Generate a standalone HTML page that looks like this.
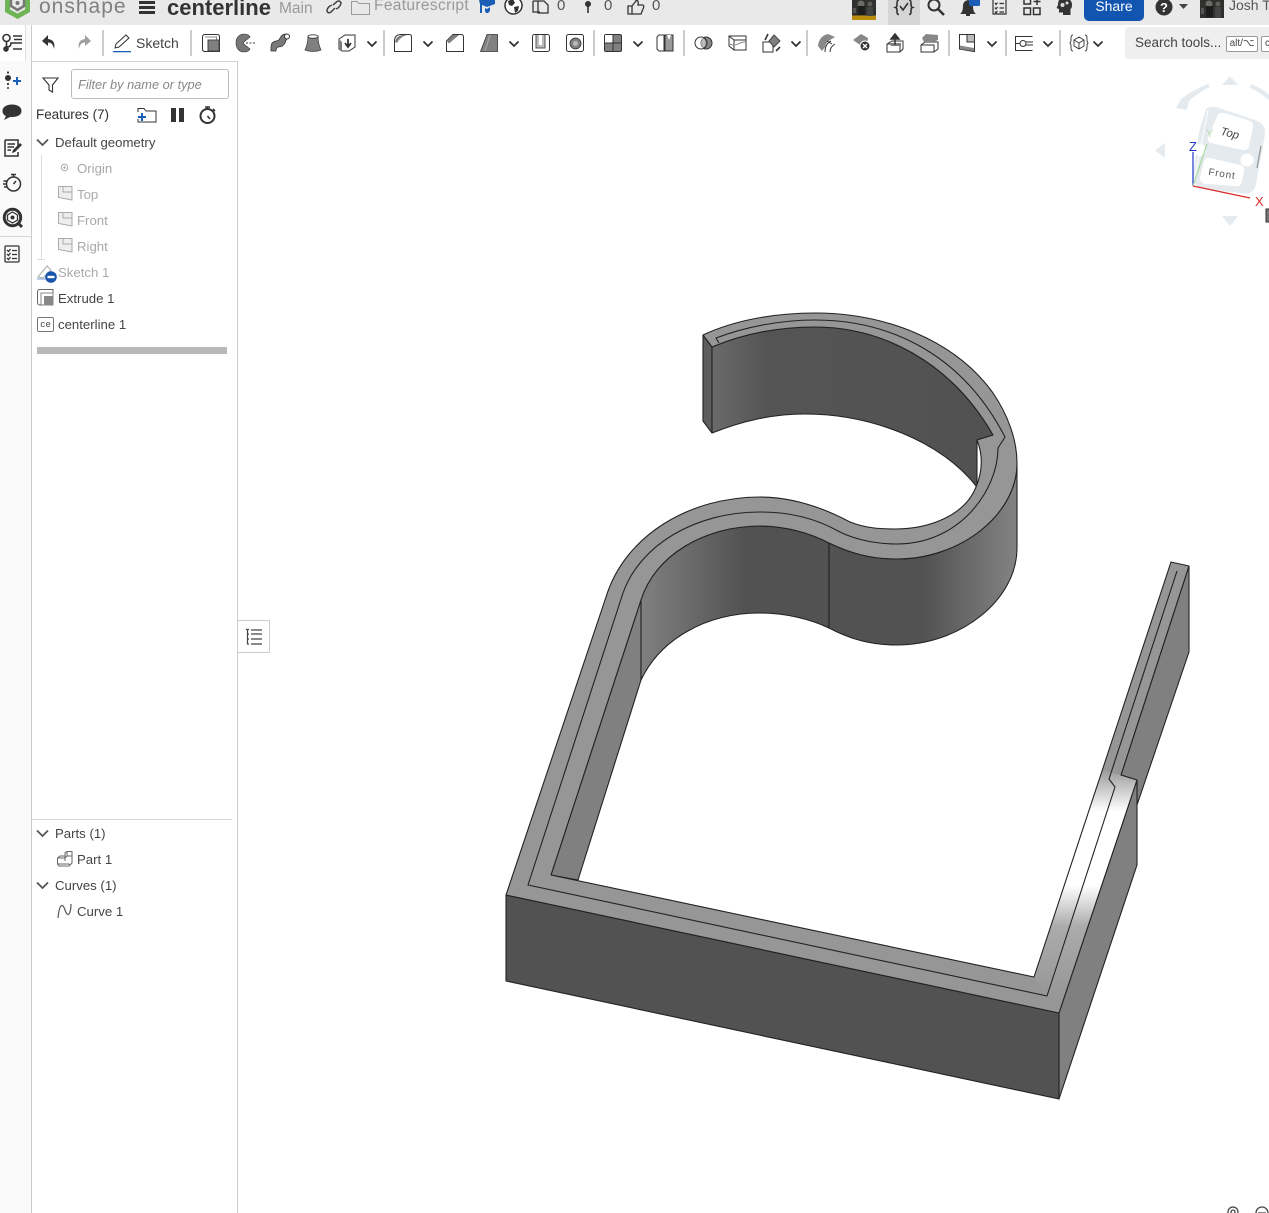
<!DOCTYPE html>
<html><head><meta charset="utf-8"><title>centerline</title>
<style>
*{box-sizing:border-box}
html,body{margin:0;padding:0;width:1269px;height:1213px;overflow:hidden;background:#fff;font-family:"Liberation Sans",sans-serif;color:#444}
.a{position:absolute}
.t{position:absolute;font-size:13.2px;line-height:16px;white-space:nowrap;color:#444}
.d{color:#a9a9a9}
.b{position:absolute;width:2px;height:26px;top:30px;background:#ccc}
svg.i{position:absolute;overflow:visible}
</style></head><body>
<div class="a" style="left:0;top:0;width:1269px;height:25px;background:#e9e9e9"></div>
<div class="a" style="left:0;top:25px;width:32px;height:1188px;background:#fafafa;border-right:1px solid #ccc"></div>
<div class="a" style="left:0;top:25px;width:26px;height:36px;background:#fff;border-right:1px solid #ddd"></div>
<div class="a" style="left:32px;top:61px;width:206px;height:1152px;background:#fff;border-top:1px solid #d4d4d4;border-right:1px solid #ccc"></div>

<!-- TOP BAR -->
<svg class="i" style="left:0;top:0" width="36" height="25" viewBox="0 0 36 25"><path d="M5-4V12L17.500 19 30 12V-4H25V9.500L17.500 13.500 10 9.500V-4Z" fill="#6fb457"/><path d="M17.500-4 24-1V6L17.500 10 11 6V-1Z" fill="none" stroke="#777" stroke-width="2.500"/><circle cx="17.500" cy="3" r="2" fill="#777"/></svg>
<div class="t" style="left:39px;top:-5px;font-size:21px;line-height:24px;color:#808080;letter-spacing:1px">onshape</div>
<div class="a" style="left:139px;top:1px;width:16px;height:3px;background:#333"></div>
<div class="a" style="left:139px;top:6px;width:16px;height:3px;background:#333"></div>
<div class="a" style="left:139px;top:11px;width:16px;height:3px;background:#333"></div>
<div class="t" style="left:167px;top:-4px;font-size:22px;line-height:24px;font-weight:bold;color:#333">centerline</div>
<div class="t" style="left:279px;top:1px;font-size:15.500px;color:#999">Main</div>
<svg class="i" style="left:326px;top:0" width="16" height="14" fill="none" stroke="#444" stroke-width="1.500"><path d="M7 5 11 1.500Q14 0 15 3 15 5 12 8L10 9M9 8 5 12Q2 14 1 11 1 8 4 6L6 5"/></svg>
<svg class="i" style="left:351px;top:0" width="19" height="15" fill="none" stroke="#999"><path d="M.5 14.500V1.500H6L8 3.500H18.500V14.500Z"/></svg>
<div class="t" style="left:374px;top:-2px;font-size:15.500px;color:#999;letter-spacing:.35px">Featurescript</div>
<svg class="i" style="left:478px;top:0" width="18" height="14" fill="#1a5eb8"><path d="M1 0H17V4L9 7 4 5V13H2V4Z"/><path d="M7 8 9 9 12 7V11L10 13H8L7 11Z"/></svg>
<svg class="i" style="left:504px;top:0" width="19" height="15"><circle cx="9.500" cy="5.500" r="8.500" fill="#fff" stroke="#333" stroke-width="1.500"/><path d="M4 1 9-1 11 3 8 6 5 5ZM10 7 15 6 14 11 11 13Z" fill="#333"/></svg>
<svg class="i" style="left:532px;top:0" width="18" height="14" fill="none" stroke="#333" stroke-width="1.300"><path d="M1 1V12H8M6 1V13H16V5L12 1H1"/></svg>
<div class="t" style="left:557px;top:-2px;font-size:15px;color:#555">0</div>
<svg class="i" style="left:584px;top:0" width="8" height="14" fill="#333"><circle cx="4" cy="4" r="3"/><rect x="3.200" y="6" width="1.600" height="7"/></svg>
<div class="t" style="left:604px;top:-2px;font-size:15px;color:#555">0</div>
<svg class="i" style="left:627px;top:0" width="18" height="15" fill="none" stroke="#333" stroke-width="1.300"><path d="M1 6H5V14H1ZM5 6 9 1V0.500Q12 0 11 5H16Q17.500 6 16 9L14 14H5"/></svg>
<div class="t" style="left:652px;top:-2px;font-size:15px;color:#555">0</div>
<svg class="i" style="left:852px;top:0" width="24" height="20"><rect width="24" height="16" fill="#2f2f2d"/><rect y="15.500" width="24" height="4.500" fill="#b98c10"/><circle cx="9" cy="4" r="3.500" fill="#6a6a66"/><circle cx="18" cy="4" r="2.500" fill="#5c5c58"/><path d="M6 6H13V15H6Z" fill="#1c1c1c"/><rect x="1" y="8" width="3" height="5" fill="#555"/><rect x="15" y="7" width="6" height="9" fill="#444"/></svg>
<div class="a" style="left:888px;top:0;width:32px;height:25px;background:#d5d5d5"></div>
<svg class="i" style="left:895px;top:0" width="18" height="16" fill="none" stroke="#333" stroke-width="1.600"><path d="M4 0Q2 0 2 3V5Q2 7 0.500 7.500 2 8 2 10V12Q2 14.500 4 14.500M14 0Q16 0 16 3V5Q16 7 17.500 7.500 16 8 16 10V12Q16 14.500 14 14.500M5 6 8 10 13 3"/></svg>
<svg class="i" style="left:926px;top:0" width="20" height="16" fill="none" stroke="#333" stroke-width="2"><circle cx="8" cy="5" r="5.500"/><path d="M12 9 18 15" stroke-width="2.500"/></svg>
<svg class="i" style="left:959px;top:0" width="22" height="16"><path d="M1 14Q4 12 4 6 4 1 9 0 14 1 14 6 14 12 17 14Z" fill="#333"/><rect x="7" y="14" width="4" height="2" fill="#333"/><rect x="10" y="-3" width="11" height="9" rx="1.500" fill="#1a5eb8"/></svg>
<svg class="i" style="left:992px;top:0" width="16" height="15" fill="none" stroke="#333" stroke-width="1.200"><path d="M1 0V14H14V0M3 3 4 4.500 5.500 2.500M3 7.500 4 9 5.500 7M3 11.500 4 13 5.500 11M7.500 3.500H12M7.500 8H12M7.500 12H12"/></svg>
<svg class="i" style="left:1023px;top:0" width="18" height="15" fill="none" stroke="#333" stroke-width="1.500"><rect x="1" y="-3" width="6.500" height="7"/><rect x="1" y="8" width="6.500" height="6.500"/><rect x="10.500" y="8" width="6.500" height="6.500"/><path d="M14 -2V5M10.500 1.500H17.500"/></svg>
<svg class="i" style="left:1055px;top:0" width="18" height="16"><path d="M8-2Q17-2 17 5 17 8 15.500 9V15H8V12.500H4V9L1.500 8 3 5Q3-2 8-2Z" fill="#333"/><circle cx="7.500" cy="5" r="2" fill="#ddd"/><circle cx="12" cy="3" r="1.500" fill="#ddd"/></svg>
<div class="a" style="left:1084px;top:-6px;width:60px;height:27px;background:#1155b0;border-radius:5px"></div>
<div class="t" style="left:1084px;top:-2px;width:60px;text-align:center;font-size:14px;color:#fff">Share</div>
<svg class="i" style="left:1155px;top:0" width="18" height="16"><circle cx="9" cy="7" r="8.500" fill="#333"/><text x="9" y="12" text-anchor="middle" font-family="Liberation Sans" font-weight="bold" font-size="13" fill="#fff">?</text></svg>
<svg class="i" style="left:1179px;top:4px" width="10" height="6"><path d="M0 0H9L4.500 5Z" fill="#444"/></svg>
<svg class="i" style="left:1200px;top:0" width="24" height="18"><rect width="24" height="18" fill="#2f2f2d"/><circle cx="9" cy="4" r="3.500" fill="#6a6a66"/><circle cx="18" cy="4" r="2.500" fill="#5c5c58"/><path d="M6 6H13V17H6Z" fill="#1c1c1c"/><rect x="1" y="8" width="3" height="6" fill="#555"/><rect x="15" y="7" width="6" height="11" fill="#444"/></svg>
<div class="t" style="left:1229px;top:-3px;font-size:14px;color:#555">Josh T</div>

<!-- LEFT RAIL -->
<svg class="i" style="left:0;top:32px" width="24" height="22" fill="none" stroke="#333" stroke-width="1.600"><circle cx="6.500" cy="6" r="3.500"/><circle cx="6" cy="17" r="2" fill="#333"/><path d="M6.500 9.500V15M7 15Q11 15 11 11H14M13 4H22M14 7.500H22M14 11H22M13 17H22"/></svg>
<svg class="i" style="left:0;top:68px" width="24" height="24"><circle cx="8" cy="4.500" r="1.100" fill="#333"/><circle cx="8" cy="10" r="3" fill="#333"/><circle cx="8" cy="16" r="1.100" fill="#333"/><circle cx="8" cy="20" r="1" fill="#333"/><path d="M13 13H21M17 9V17" stroke="#1a5eb8" stroke-width="2"/></svg>
<svg class="i" style="left:2px;top:104px" width="20" height="18"><path d="M10 0.500C15.500 .5 19.500 3 19.500 7S15.500 13 10 13L8 13 2 16 4 12C1.500 11 .5 9 .5 7 .5 3 4.500 .5 10 .5Z" fill="#333"/></svg>
<svg class="i" style="left:3px;top:138px" width="20" height="20" fill="none" stroke="#333" stroke-width="1.500"><path d="M2 2H15V10M15 14V18H2V2M4.500 6H12M4.500 9H11M4.500 12H8"/><path d="M9 15 10 12 17 5 19 7 12 14Z" fill="#333" stroke="none"/></svg>
<svg class="i" style="left:3px;top:173px" width="20" height="20" fill="none" stroke="#333" stroke-width="1.500"><circle cx="10.500" cy="11" r="7"/><path d="M8 1.500H13M10.500 2V4M10.500 11 13 8M0.500 8H4M0 11H3M1 14H4"/></svg>
<svg class="i" style="left:2px;top:207px" width="22" height="22"><circle cx="10.500" cy="10.500" r="8.200" fill="#fff" stroke="#333" stroke-width="3"/><path d="M16 16 20 20" stroke="#333" stroke-width="3"/><path d="M10.500 5 15.500 8V13L10.500 16 5.500 13V8Z" fill="none" stroke="#333" stroke-width="1.300"/><circle cx="10.500" cy="10.500" r="2" fill="#333"/></svg>
<div class="a" style="left:0;top:236px;width:32px;height:1px;background:#d4d4d4"></div>
<svg class="i" style="left:4px;top:245px" width="16" height="18" fill="none" stroke="#333" stroke-width="1.300"><rect x="1" y="1" width="14" height="16" rx="1"/><path d="M3 5 4.500 6.500 6.500 4M3 9 4.500 10.500 6.500 8M3 13 4.500 14.500 6.500 12M8 5.500H13M8 9.500H13M8 13.500H13"/></svg>

<!-- TOOLBAR -->
<svg class="i" style="left:41px;top:34px" width="16" height="16"><path d="M7 1 1 7 7 12V8.500Q12 8.500 13 15 15 6 7 5Z" fill="#333"/></svg>
<svg class="i" style="left:76px;top:34px" width="16" height="16"><path d="M9 1 15 7 9 12V8.500Q4 8.500 3 15 1 6 9 5Z" fill="#a0a0a0"/></svg>
<div class="b" style="left:102px"></div>
<svg class="i" style="left:113px;top:34px" width="20" height="19"><path d="M2 14 3 10 13 1 16 4 6 13Z" fill="#fff" stroke="#333"/><rect y="17" width="18" height="1.300" fill="#1a5eb8"/></svg>
<div class="t" style="left:136px;top:35px;font-size:14px">Sketch</div>
<div class="b" style="left:190px"></div>
<svg class="i" style="left:202px;top:34px" width="18" height="18"><path d="M3 .5H15Q17.500 .5 17.500 3V17.500H3Q.5 17.500 .5 15V3Q.5 .5 3 .5Z" fill="#fff" stroke="#333"/><path d="M3 3H14.500V14.500" fill="none" stroke="#888"/><path d="M6 6H17V17H6Z" fill="#808080" stroke="#444"/></svg>
<svg class="i" style="left:236px;top:34px" width="20" height="18"><path d="M8 0C3 0 0 4 0 9S3 18 8 18C11 18 13 17 14 15L9 11 7 9 9 7 14 3C13 1 11 0 8 0Z" fill="#777" stroke="#333" stroke-width=".6"/><path d="M10 9H20" stroke="#333" stroke-dasharray="2 1.500"/></svg>
<svg class="i" style="left:270px;top:34px" width="20" height="18"><path d="M1 17V13Q1 8 6 7 9 7 10 4 12 0 16 0L19 3Q16 5 15 9 13 13 8 13 6 14 6 17Z" fill="#7a7a7a" stroke="#333" stroke-width=".8"/><circle cx="17" cy="2.500" r="2.500" fill="#fff" stroke="#333"/></svg>
<svg class="i" style="left:304px;top:34px" width="18" height="18"><path d="M4 2Q9 0 14 2 14 10 17 16 9 19 1 16 4 10 4 2Z" fill="#808080" stroke="#444" stroke-width=".8"/><ellipse cx="9" cy="2.500" rx="5" ry="1.700" fill="#fff" stroke="#333" stroke-width=".8"/></svg>
<svg class="i" style="left:338px;top:34px" width="18" height="18"><path d="M1 5 7 1H17V13L11 17H4L1 15Z" fill="#fff" stroke="#333"/><path d="M1 5 4 8V17L1 15Z" fill="#808080"/><path d="M10 5V12M7 9 10 13 13 9" stroke="#333" stroke-width="1.800" fill="none"/></svg>
<svg class="i" style="left:366px;top:40px" width="12" height="8"><path d="M1.500 1.500 6 6 10.500 1.500" fill="none" stroke="#333" stroke-width="1.800"/></svg>
<div class="b" style="left:383px"></div>
<svg class="i" style="left:394px;top:34px" width="18" height="18"><path d="M.5 17.500V7Q.5 .5 7 .5H15Q17.500 .5 17.500 3V17.500Z" fill="#fff" stroke="#333"/><path d="M1 8Q2 2 8 1H13Q6 3 3 9Z" fill="#808080"/></svg>
<svg class="i" style="left:422px;top:40px" width="12" height="8"><path d="M1.500 1.500 6 6 10.500 1.500" fill="none" stroke="#333" stroke-width="1.800"/></svg>
<svg class="i" style="left:446px;top:34px" width="18" height="18"><path d="M.5 17.500V7L7 .5H15Q17.500 .5 17.500 3V17.500Z" fill="#fff" stroke="#333"/><path d="M1 7 7 1H13L3 9.500Z" fill="#808080"/></svg>
<svg class="i" style="left:480px;top:34px" width="18" height="18"><path d="M.5 17.500 7 .5H17.500V17.500Z" fill="#808080" stroke="#333" stroke-width=".8"/><path d="M5 17 10 1" stroke="#aaa" fill="none"/></svg>
<svg class="i" style="left:508px;top:40px" width="12" height="8"><path d="M1.500 1.500 6 6 10.500 1.500" fill="none" stroke="#333" stroke-width="1.800"/></svg>
<svg class="i" style="left:532px;top:34px" width="18" height="18"><rect x=".5" y=".5" width="17" height="17" rx="2" fill="#fff" stroke="#333"/><path d="M4 1V14H13V1" fill="#bbb" stroke="#555"/><path d="M7 1V11H10V1" fill="#fff"/></svg>
<svg class="i" style="left:566px;top:34px" width="18" height="18"><rect x=".5" y=".5" width="17" height="17" rx="2" fill="#fff" stroke="#333"/><circle cx="9.500" cy="9.500" r="5.500" fill="#808080" stroke="#333" stroke-width=".8"/><circle cx="9.500" cy="9.500" r="2.500" fill="#bbb"/></svg>
<div class="b" style="left:593px"></div>
<svg class="i" style="left:604px;top:34px" width="18" height="18"><rect x=".5" y=".5" width="17" height="17" rx="1.500" fill="#808080" stroke="#333"/><rect x="1" y="1" width="8" height="8" fill="#fff"/><path d="M9 0V18M0 9H18" stroke="#333"/></svg>
<svg class="i" style="left:632px;top:40px" width="12" height="8"><path d="M1.500 1.500 6 6 10.500 1.500" fill="none" stroke="#333" stroke-width="1.800"/></svg>
<svg class="i" style="left:656px;top:34px" width="18" height="18"><path d="M1 3 3 1H8V17H3L1 15Z" fill="#fff" stroke="#333"/><path d="M9 1H17V17H9Z" fill="#999" stroke="#333"/><path d="M11 1 13 6 15 1Z" fill="#fff"/></svg>
<div class="b" style="left:683px"></div>
<svg class="i" style="left:694px;top:36px" width="19" height="14"><circle cx="12" cy="7" r="6" fill="#888" stroke="#333"/><circle cx="7" cy="7" r="6" fill="#fff" stroke="#333"/><path d="M9.500 2A6 6 0 0 1 9.500 12 6 6 0 0 1 9.500 2Z" fill="#bbb" stroke="#333" stroke-width=".5"/></svg>
<svg class="i" style="left:728px;top:35px" width="19" height="16" fill="none" stroke="#333"><path d="M1 1H18V15H6L1 11ZM1 1 6 5H18M6 5V15"/><path d="M1 9Q7 11 10 9T18 7" stroke="#888"/></svg>
<svg class="i" style="left:762px;top:33px" width="19" height="20"><path d="M1 9H11V19H1Z" fill="#fff" stroke="#333"/><path d="M12 2 18 8 12 14 7 8Z" fill="#808080" stroke="#444"/><path d="M3 7 6 1M14 18 18 14" stroke="#333" stroke-width="1.600"/></svg>
<svg class="i" style="left:790px;top:40px" width="12" height="8"><path d="M1.500 1.500 6 6 10.500 1.500" fill="none" stroke="#333" stroke-width="1.800"/></svg>
<div class="b" style="left:806px"></div>
<svg class="i" style="left:817px;top:33px" width="20" height="20"><path d="M1 13Q2 3 11 1L18 4 13 7Q9 9 8 14L5 18Z" fill="#888"/><path d="M8 19Q8 11 14 8M13 19Q13 14 18 11M10 8 15 11" stroke="#333" fill="none"/></svg>
<svg class="i" style="left:852px;top:33px" width="20" height="20"><path d="M1 7 9 1 16 5 15 12H8Z" fill="#888"/><circle cx="13" cy="13" r="5" fill="#333" stroke="#fff"/><path d="M11 11 15 15M15 11 11 15" stroke="#fff" stroke-width="1.300"/></svg>
<svg class="i" style="left:886px;top:33px" width="19" height="20"><path d="M1 11 6 8H17V16L14 19H1Z" fill="#fff" stroke="#333"/><path d="M1 11H14V19" fill="none" stroke="#333"/><path d="M3 10H15V13H5Z" fill="#808080"/><path d="M9 12V3M5 6 9 1 13 6Z" fill="#333" stroke="#333" stroke-width="1.500"/></svg>
<svg class="i" style="left:920px;top:33px" width="19" height="20"><path d="M1 12 5 9H18V16L14 19H1Z" fill="#fff" stroke="#333"/><path d="M1 12H14V19" fill="none" stroke="#333"/><path d="M2 5 6 1 18 2V7L13 9H4Z" fill="#888"/></svg>
<div class="b" style="left:948px"></div>
<svg class="i" style="left:959px;top:34px" width="17" height="18"><path d="M.5 .5H15.500V17.500L.5 15Z" fill="#bbb" stroke="#333"/><path d="M.5 .5H8V8H15.500V17.500L.5 15Z" fill="#fff" stroke="#333"/><path d="M1 11.500 15 14V17L1 15Z" fill="#888"/></svg>
<svg class="i" style="left:986px;top:40px" width="12" height="8"><path d="M1.500 1.500 6 6 10.500 1.500" fill="none" stroke="#333" stroke-width="1.800"/></svg>
<div class="b" style="left:1005px"></div>
<svg class="i" style="left:1015px;top:36px" width="18" height="15" fill="none" stroke="#333"><path d="M.5 0V14.500H17.500M.5 .5H17.500M1 7.500H5M11 6H18M11 9H18"/><circle cx="8" cy="7.500" r="3"/></svg>
<svg class="i" style="left:1042px;top:40px" width="12" height="8"><path d="M1.500 1.500 6 6 10.500 1.500" fill="none" stroke="#333" stroke-width="1.800"/></svg>
<div class="b" style="left:1059px"></div>
<svg class="i" style="left:1070px;top:35px" width="18" height="16" fill="none" stroke="#333" stroke-width=".9"><path d="M3 0Q1 0 1 3V6L0 8 1 10V13Q1 16 3 16M15 0Q17 0 17 3V6L18 8 17 10V13Q17 16 15 16M9 2 14 5V11L9 14 4 11V5ZM4 5 9 8 14 5M9 8V14"/></svg>
<svg class="i" style="left:1092px;top:40px" width="12" height="8"><path d="M1.500 1.500 6 6 10.500 1.500" fill="none" stroke="#333" stroke-width="1.800"/></svg>
<div class="a" style="left:1125px;top:27px;width:144px;height:32px;background:#efefef;border-radius:4px 0 0 4px"></div>
<div class="t" style="left:1135px;top:35px;font-size:13.500px;color:#444">Search tools...</div>
<div class="a" style="left:1226px;top:36px;width:32px;height:16px;background:#fff;border:1px solid #999;border-radius:2px;font-size:10px;line-height:14px;text-align:center;color:#444">alt/⌥</div>
<div class="a" style="left:1261px;top:36px;width:12px;height:16px;background:#fff;border:1px solid #999;border-radius:2px;font-size:10px;line-height:14px;padding-left:3px;color:#444">c</div>

<!-- FEATURE PANEL -->
<svg class="i" style="left:42px;top:77px" width="18" height="17" fill="none" stroke="#333" stroke-width="1.100"><path d="M1 1H16L10.500 8V15L7 13V8Z"/></svg>
<div class="a" style="left:71px;top:69px;width:158px;height:30px;border:1px solid #bbb;border-radius:3px;background:#fff"></div>
<div class="t" style="left:78px;top:77px;font-size:12.800px;font-style:italic;color:#888">Filter by name or type</div>
<div class="t" style="left:36px;top:107px;font-size:13.500px;color:#333;letter-spacing:-.05px">Features (7)</div>
<svg class="i" style="left:137px;top:107px" width="20" height="16"><path d="M1 5V1.500H7L9 4H19V15H1V12" fill="none" stroke="#333"/><path d="M1 10H9M5 6V14" stroke="#1a5eb8" stroke-width="2"/></svg>
<div class="a" style="left:171px;top:108px;width:5px;height:14px;background:#333"></div>
<div class="a" style="left:179px;top:108px;width:5px;height:14px;background:#333"></div>
<svg class="i" style="left:198px;top:105px" width="20" height="20" fill="none" stroke="#333" stroke-width="2"><circle cx="9.500" cy="11" r="7"/><path d="M7 2H12M9.500 2V4M15 4 17 6M9.500 11 12 14" stroke-width="1.600"/></svg>

<svg class="i" style="left:36px;top:138px" width="13" height="9"><path d="M1 1.500 6.500 7 12 1.500" fill="none" stroke="#555" stroke-width="1.800"/></svg>
<div class="t" style="left:55px;top:135px">Default geometry</div>
<div class="a" style="left:41px;top:155px;width:1px;height:104px;background:#ddd"></div>
<div class="a" style="left:37px;top:259px;width:8px;height:1px;background:#ddd"></div>
<svg class="i" style="left:60px;top:163px" width="10" height="10"><circle cx="4.500" cy="4.500" r="3.300" fill="none" stroke="#aaa"/><circle cx="4.500" cy="4.500" r="1.300" fill="#aaa"/></svg>
<div class="t d" style="left:77px;top:161px">Origin</div>
<svg class="i" style="left:58px;top:186px" width="15" height="15"><path d="M.5 .5H14V14L.5 11.500Z" fill="#eee" stroke="#aaa"/><path d="M5 1V6H14" fill="none" stroke="#aaa"/></svg>
<div class="t d" style="left:77px;top:187px">Top</div>
<svg class="i" style="left:58px;top:212px" width="15" height="15"><path d="M.5 .5H14V14L.5 11.500Z" fill="#eee" stroke="#aaa"/><path d="M5 1V6H14" fill="none" stroke="#aaa"/></svg>
<div class="t d" style="left:77px;top:213px">Front</div>
<svg class="i" style="left:58px;top:238px" width="15" height="15"><path d="M.5 .5H14V14L.5 11.500Z" fill="#eee" stroke="#aaa"/><path d="M5 1V6H14" fill="none" stroke="#aaa"/></svg>
<div class="t d" style="left:77px;top:239px">Right</div>
<svg class="i" style="left:37px;top:264px" width="21" height="20"><path d="M1 13 10 2 14 6 6 14Z" fill="#fff" stroke="#aaa"/><path d="M0 15H12" stroke="#7c9ad0"/><circle cx="14" cy="13" r="5.800" fill="#1a55ad"/><rect x="10.500" y="11.800" width="7" height="2.400" fill="#fff"/></svg>
<div class="t d" style="left:58px;top:265px">Sketch 1</div>
<svg class="i" style="left:37px;top:289px" width="17" height="17"><path d="M3 .5H16V16H3Q.5 16 .5 13V3Q.5 .5 3 .5Z" fill="#fff" stroke="#666"/><path d="M4 4H16V16H6Q4 16 4 14Z" fill="#fff" stroke="#888"/><rect x="7" y="7" width="9" height="9" fill="#888"/></svg>
<div class="t" style="left:58px;top:291px">Extrude 1</div>
<div class="a" style="left:37px;top:317px;width:17px;height:15px;border:1px solid #777;border-radius:2px;font-size:9px;line-height:14px;text-align:center;font-family:'Liberation Mono',monospace;color:#444;background:#fff">ce</div>
<div class="t" style="left:58px;top:317px">centerline 1</div>
<div class="a" style="left:37px;top:347px;width:190px;height:7px;background:#b8b8b8"></div>

<div class="a" style="left:32px;top:819px;width:200px;height:1px;background:#d8d8d8"></div>
<svg class="i" style="left:36px;top:829px" width="13" height="9"><path d="M1 1.500 6.500 7 12 1.500" fill="none" stroke="#555" stroke-width="1.800"/></svg>
<div class="t" style="left:55px;top:826px">Parts (1)</div>
<svg class="i" style="left:57px;top:851px" width="16" height="16" fill="#fff" stroke="#666"><path d="M.5 7 3 5H8V2L10 .5H15V12L12 15H2L.5 13Z"/><path d="M.5 7H8L10 5H15M10 1V5M8 5V10M.5 13H12V15"/></svg>
<div class="t" style="left:77px;top:852px">Part 1</div>
<svg class="i" style="left:36px;top:881px" width="13" height="9"><path d="M1 1.500 6.500 7 12 1.500" fill="none" stroke="#555" stroke-width="1.800"/></svg>
<div class="t" style="left:55px;top:878px">Curves (1)</div>
<svg class="i" style="left:57px;top:903px" width="16" height="16" fill="none" stroke="#555" stroke-width="1.200"><path d="M1 15Q2 5 4 3 6 1 8 7 10 13 12 11 14 8 14 1"/></svg>
<div class="t" style="left:77px;top:904px">Curve 1</div>

<!-- panel toggle -->
<div class="a" style="left:238px;top:620px;width:32px;height:33px;background:#fff;border:1px solid #ccc;border-left:none"></div>
<svg class="i" style="left:245px;top:628px" width="18" height="18" fill="none" stroke="#444" stroke-width="1.200"><path d="M1 1.500H4M2.500 1.500V16H4M2.500 6H4M2.500 11H4M6 2H17M6 6H17M6 11H17M6 16H17"/></svg>

<!-- VIEW CUBE -->
<svg class="i" style="left:1140px;top:70px" width="129" height="160" viewBox="1140 70 129 160">
<g fill="#e4eaee">
<path d="M1222 85H1238L1230 76Z"/>
<path d="M1222 216H1238L1230 226Z"/>
<path d="M1165 143V158L1155 150.500Z"/>
<path d="M1176 108 1187 110 1189 101Q1199 92 1210 87L1208 84Q1193 90 1181 99Z"/>
<path d="M1251 84Q1262 88 1269 95V100Q1260 92 1250 88Z"/>
<path d="M1206 109Q1210 106 1216 107L1255 120Q1266 124 1265 134L1256 184Q1254 196 1240 193L1205 189Q1193 186 1193 176L1199 132Z"/>
</g>
<path d="M1217 117Q1218 112 1224 113L1248 120Q1254 122 1253 128L1249 146Q1248 151 1242 150L1211 143Q1207 142 1208 137Z" fill="#fff"/>
<path d="M1204 161Q1205 157 1210 158L1240 165Q1245 166 1244 171L1242 180Q1241 188 1235 186L1205 184Q1199 182 1200 177Z" fill="#fff"/>
<circle cx="1200" cy="150" r="6" fill="#fff"/><circle cx="1247" cy="160" r="6.500" fill="#fff"/>
<path d="M1257 168 1261 146" stroke="#999" stroke-width="1.300"/>
<path d="M1208 110 1193 186" stroke="#fff" stroke-width="1"/>
<text x="1230" y="137" text-anchor="middle" font-family="Liberation Sans" font-size="11.500" font-style="italic" fill="#444" transform="rotate(14 1230 133)">Top</text>
<text x="1222" y="177" text-anchor="middle" font-family="Liberation Sans" font-size="10" fill="#555" letter-spacing=".8" transform="rotate(9 1222 174)">Front</text>
<path d="M1193 186V152" stroke="#2233cc" stroke-width="1.200"/>
<path d="M1193 186 1207 144" stroke="#a8d8a0" stroke-width="1.200"/>
<path d="M1193 186 1250 198" stroke="#dd2a2a" stroke-width="1.200"/>
<text x="1189" y="151" font-family="Liberation Sans" font-size="13" fill="#2233cc">Z</text>
<text x="1206" y="137" font-family="Liberation Sans" font-size="11" fill="#b5dcb0">Y</text>
<text x="1255" y="206" font-family="Liberation Sans" font-size="13" fill="#dd2a2a">X</text>
<rect x="1266" y="209" width="5" height="13" fill="#777" stroke="#333"/>
</svg>

<!-- MODEL -->
<svg class="i" style="left:0;top:0" width="1269" height="1213" viewBox="0 0 1269 1213">
<defs>
<linearGradient id="gS" gradientUnits="userSpaceOnUse" x1="641" y1="0" x2="829" y2="0"><stop offset="0" stop-color="#808080"/><stop offset=".55" stop-color="#525252"/><stop offset="1" stop-color="#525252"/></linearGradient>
<linearGradient id="gR" gradientUnits="userSpaceOnUse" x1="829" y1="0" x2="1017" y2="0"><stop offset="0" stop-color="#525252"/><stop offset=".5" stop-color="#525252"/><stop offset="1" stop-color="#838383"/></linearGradient>
<linearGradient id="gC" gradientUnits="userSpaceOnUse" x1="712" y1="0" x2="990" y2="0"><stop offset="0" stop-color="#6a6a6a"/><stop offset=".2" stop-color="#545454"/><stop offset="1" stop-color="#525252"/></linearGradient>
<linearGradient id="gW" gradientUnits="userSpaceOnUse" x1="0" y1="770" x2="0" y2="1000"><stop offset="0" stop-color="#9b9b9b"/><stop offset=".18" stop-color="#fff"/><stop offset=".5" stop-color="#fff"/><stop offset=".68" stop-color="#ababab"/><stop offset="1" stop-color="#969696"/></linearGradient>
</defs>
<g stroke="#222" stroke-width="1.100" stroke-linejoin="round">
<!-- end face -->
<path d="M703 335 712 347V433L703 421Z" fill="#5e5e5e"/>
<!-- C inner wall -->
<path d="M712 347C745 333 780 327 815 327 880 327 950 360 993 435L977 440V487C940 440 870 414 805 414 770 414 740 422 712 433Z" fill="url(#gC)"/>
<!-- left straight inner wall -->
<path d="M551 875 641 600V680L578 880Z" fill="#808080"/>
<!-- S wall -->
<path d="M641 600C655 555 705 526 760 526 785 526 810 533 829 543V628C810 619 785 613 760 613 705 613 660 640 641 680Z" fill="url(#gS)"/>
<!-- right lobe wall -->
<path d="M829 543C850 553 870 559 897 559 960 559 1017 515 1017 463V548C1017 600 960 645 897 645 870 645 850 639 829 628Z" fill="url(#gR)"/>
<!-- right far wall -->
<path d="M1121 775 1189 566V652L1137 805V780Z" fill="#808080"/>
<!-- right near wall -->
<path d="M1137 780V865L1059 1099V1013Z" fill="#808080"/>
<!-- front wall -->
<path d="M506 895 1059 1013V1099L506 981Z" fill="#525252"/>
<!-- rim fill -->
<path d="M703 335C735 320 775 313 815 313 885 313 955 340 993 393 1008 415 1017 440 1017 463 1017 515 960 559 897 559 870 559 850 553 829 543 810 533 785 526 760 526 705 526 655 555 641 600L551 875 1034 977 1171 562 1189 566 1121 775 1137 780 1059 1013 506 895 606 597C625 535 690 497 760 497 790 497 820 506 850 522 865 528 880 529 895 529 930 529 965 515 976 487 983 470 983 455 977 440L993 435C950 360 880 327 815 327 780 327 745 333 712 347Z" fill="#969696" stroke="none"/>
<!-- bright strip -->
<path d="M1102.300 770 1121 775 1137 780 1059 1013 1034 977Z" fill="url(#gW)" stroke="none"/>
<!-- rim stroke -->
<path d="M703 335C735 320 775 313 815 313 885 313 955 340 993 393 1008 415 1017 440 1017 463 1017 515 960 559 897 559 870 559 850 553 829 543 810 533 785 526 760 526 705 526 655 555 641 600L551 875 1034 977 1171 562 1189 566 1121 775 1137 780 1059 1013 506 895 606 597C625 535 690 497 760 497 790 497 820 506 850 522 865 528 880 529 895 529 930 529 965 515 976 487 983 470 983 455 977 440L993 435C950 360 880 327 815 327 780 327 745 333 712 347Z" fill="none"/>
<!-- mid line -->
<path d="M719 343 716 338C745 327 780 320 815 320 885 320 960 350 1005 437L998 448C998 490 960 544 897 544 870 544 850 537 840 532 815 518 790 512 760 512 695 512 640 545 623 593L528 885 1047 996 1115 787 1109 779 1177 571" fill="none"/>
</g>
</svg>
<!-- bottom right partial icons -->
<svg class="i" style="left:1225px;top:1205px" width="44" height="8" fill="none" stroke="#444" stroke-width="1.300"><circle cx="8" cy="7" r="5"/><circle cx="8" cy="7" r="2"/><circle cx="37" cy="8" r="6"/><path d="M33 8H41"/></svg>
</body></html>
